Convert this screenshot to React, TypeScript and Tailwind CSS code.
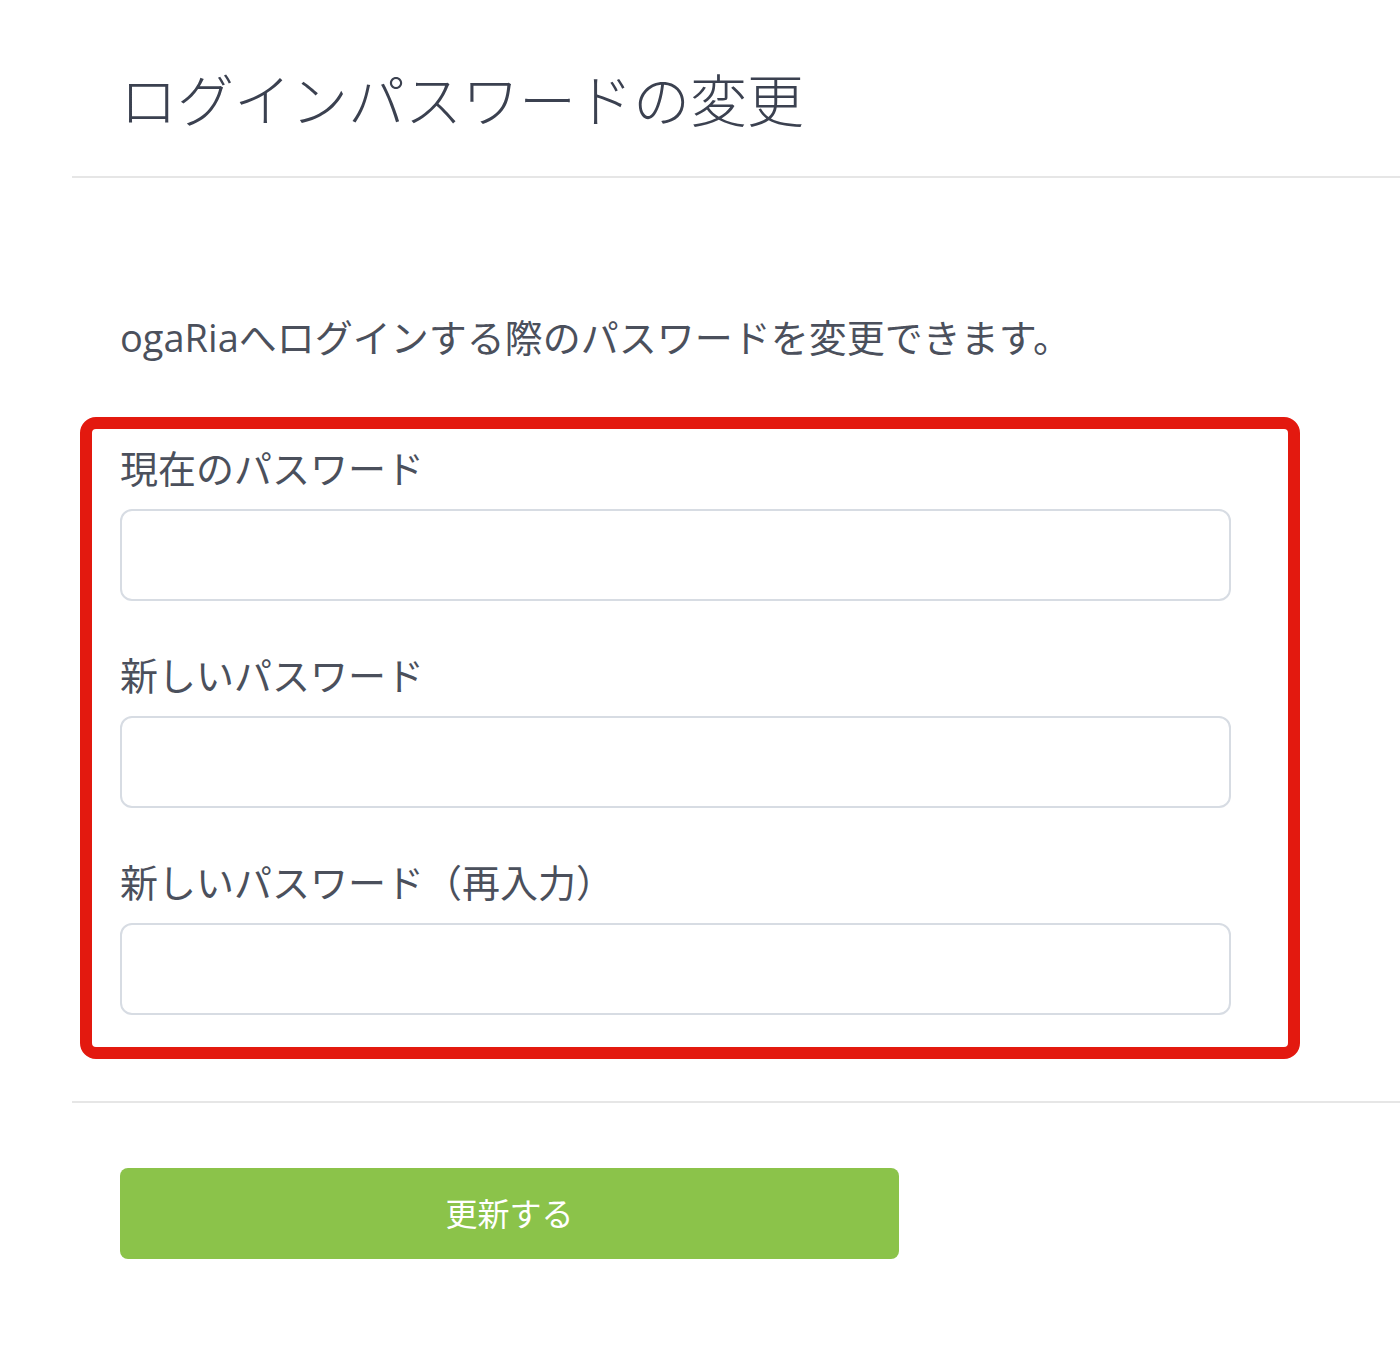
const font = "font-['Open_Sans','Noto_Sans_CJK_JP',sans-serif]";

function Field({ label }: { label: string }) {
  return (
    <div className="flex flex-col">
      <label className="h-[56px] leading-[56px] text-[38px] text-[#4b505c]">
        {label}
      </label>
      <input
        type="password"
        className="mt-[13px] h-[92px] w-[1111px] rounded-[12px] border-2 border-[#d7dce3] bg-white px-4 outline-none"
      />
    </div>
  );
}

export default function App() {
  return (
    <div className={`min-h-[1360px] bg-white ${font}`}>
      <div className="ml-[72px]">
        {/* Header */}
        <div className="pl-12 pt-[58px] pb-[34px]">
          <h1 className="h-[84px] leading-[84px] text-[57px] font-light text-[#3b4150]">
            ログインパスワードの変更
          </h1>
        </div>
        <div className="h-[2px] bg-[#e6e6e6]" />

        {/* Body */}
        <div className="pt-[131px]">
          <p className="pl-12 h-[56px] leading-[56px] text-[38px] text-[#4b505c]">
            ogaRiaへログインする際のパスワードを変更できます。
          </p>

          <div className="ml-2 mt-[52px] w-[1220px] rounded-[16px] border-[12px] border-[#e3190f] pl-[28px] pt-[11px] pb-[32px]">
            <div className="flex flex-col gap-[46px]">
              <Field label="現在のパスワード" />
              <Field label="新しいパスワード" />
              <Field label="新しいパスワード（再入力）" />
            </div>
          </div>
        </div>

        <div className="mt-[42px] h-[2px] bg-[#e6e6e6]" />

        {/* Footer */}
        <div className="pl-12 pt-[65px]">
          <button className="h-[91px] w-[779px] rounded-[8px] bg-[#8bc34a] text-[32px] text-white">
            更新する
          </button>
        </div>
      </div>
    </div>
  );
}
